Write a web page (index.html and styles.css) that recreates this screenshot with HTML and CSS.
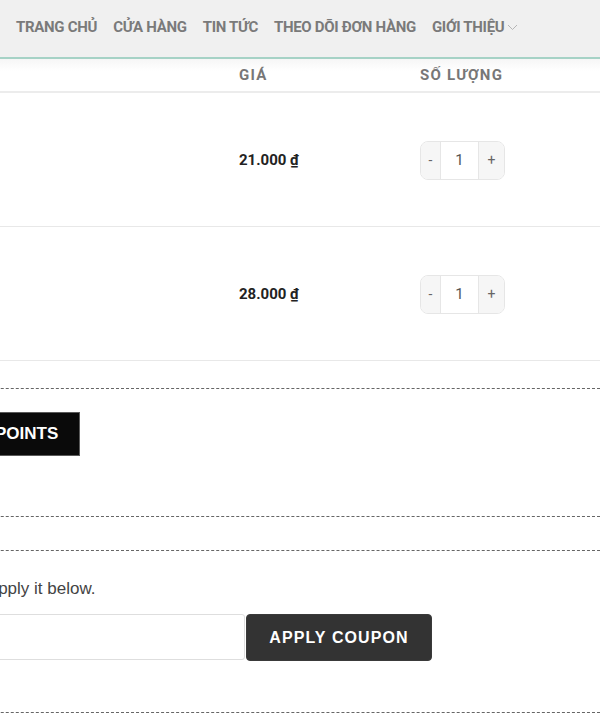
FILE: index.html
```html
<!DOCTYPE html>
<html lang="vi">
<head>
<meta charset="utf-8">
<title>Giỏ hàng</title>
<link rel="stylesheet" href="styles.css">
</head>
<body>
<header class="nav">
  <ul class="menu">
    <li>TRANG CHỦ</li>
    <li>CỬA HÀNG</li>
    <li>TIN TỨC</li>
    <li>THEO DÕI ĐƠN HÀNG</li>
    <li class="has-sub">GIỚI THIỆU
      <svg class="chev" width="11" height="7" viewBox="0 0 11 7"><path d="M1 1 L5.5 5.5 L10 1" fill="none" stroke="#b5b5b5" stroke-width="1"/></svg>
    </li>
  </ul>
</header>
<main class="cart">
  <div class="thead">
    <div class="c-prod"></div>
    <div class="c-price">GIÁ</div>
    <div class="c-qty">SỐ LƯỢNG</div>
  </div>
  <div class="row">
    <div class="c-prod"></div>
    <div class="c-price price">21.000 <u>₫</u></div>
    <div class="c-qty">
      <div class="qty"><span class="btn">-</span><span class="val">1</span><span class="btn">+</span></div>
    </div>
  </div>
  <div class="row">
    <div class="c-prod"></div>
    <div class="c-price price">28.000 <u>₫</u></div>
    <div class="c-qty">
      <div class="qty"><span class="btn">-</span><span class="val">1</span><span class="btn">+</span></div>
    </div>
  </div>
  <section class="points">
    <button class="points-btn">POINTS</button>
  </section>
  <section class="spacer"></section>
  <section class="coupon">
    <p class="coupon-text">If you have a coupon code, please apply it below.</p>
    <div class="coupon-row">
      <input class="coupon-input" type="text">
      <button class="coupon-btn">APPLY COUPON</button>
    </div>
  </section>
</main>
</body>
</html>
```
FILE: styles.css
```css
html, body {
  margin: 0;
  padding: 0;
  overflow: hidden;
  background: #fff;
}
body {
  width: 600px;
  font-family: "Liberation Sans", Arial, sans-serif;
}
.nav {
  height: 57px;
  background: #f0f0f0;
  border-bottom: 2px solid #a6d2c6;
  display: flex;
  align-items: center;
}
.menu {
  list-style: none;
  margin: 0;
  padding: 0 0 4px 16px;
  display: flex;
  gap: 16px;
  font-family: Roboto, sans-serif;
  font-weight: 700;
  font-size: 15px;
  letter-spacing: -0.3px;
  color: #7a7a7a;
  white-space: nowrap;
}
.has-sub {
  display: flex;
  align-items: center;
  gap: 3px;
}
.chev { margin-top: 1px; }
.cart {
  margin-left: -360px;
  width: 960px;
}
.thead, .row {
  display: grid;
  grid-template-columns: 599px 181px 1fr;
  align-items: center;
  font-family: Roboto, sans-serif;
}
.thead {
  height: 32px;
  background: linear-gradient(#f6f6f6, #fff 12px);
  border-bottom: 2px solid #ececec;
  font-weight: 700;
  font-size: 15px;
  letter-spacing: 1.2px;
  color: #777;
}
.row {
  height: 133px;
  border-bottom: 1px solid #e8e8e8;
}
.price {
  font-weight: 700;
  font-size: 15px;
  color: #222;
}
.price u { text-decoration-thickness: 1px; text-underline-offset: 2px; }
.qty {
  display: inline-flex;
  height: 37px;
  margin-top: 1px;
  border: 1px solid #e6e6e6;
  border-radius: 8px;
  overflow: hidden;
  font-size: 14px;
  color: #666;
}
.qty .btn {
  width: 19px;
  background: #f6f6f6;
  display: flex;
  align-items: center;
  justify-content: center;
}
.qty .btn:last-child { width: 25px; }
.qty .val {
  width: 37px;
  border-left: 1px solid #e6e6e6;
  border-right: 1px solid #e6e6e6;
  background: #fff;
  display: flex;
  align-items: center;
  justify-content: center;
  color: #555;
  font-size: 15px;
}
.points {
  margin-top: 27px;
  border-top: 1px dashed #666;
  border-bottom: 1px dashed #666;
  padding: 23px 0 60px 332px;
}
.points-btn {
  height: 44px;
  padding: 0 21px 0 22px;
  background: #0a0a0a;
  border: 1px solid #5a5a5a;
  color: #fff;
  font-family: "Liberation Sans", Arial, sans-serif;
  font-weight: 700;
  font-size: 17px;
  letter-spacing: 0;
}
.spacer {
  height: 33px;
  border-bottom: 1px dashed #666;
}
.coupon {
  padding: 24px 0 51px 85px;
  border-bottom: 1px dashed #666;
}
.coupon-text {
  margin: 0;
  font-size: 17px;
  line-height: 27px;
  color: #444;
  white-space: nowrap;
}
.coupon-row {
  margin-top: 12px;
  display: flex;
  gap: 1px;
}
.coupon-input {
  box-sizing: border-box;
  width: 520px;
  height: 46px;
  border: 1px solid #dedede;
  border-radius: 3px;
  padding: 0 10px;
  margin: 0;
}
.coupon-btn {
  box-sizing: border-box;
  height: 47px;
  width: 186px;
  background: #333;
  border: 1px solid #3a3a3a;
  border-radius: 4px;
  color: #fff;
  font-family: "Liberation Sans", Arial, sans-serif;
  font-weight: 700;
  font-size: 16px;
  letter-spacing: 1.1px;
  margin: 0;
}
```
